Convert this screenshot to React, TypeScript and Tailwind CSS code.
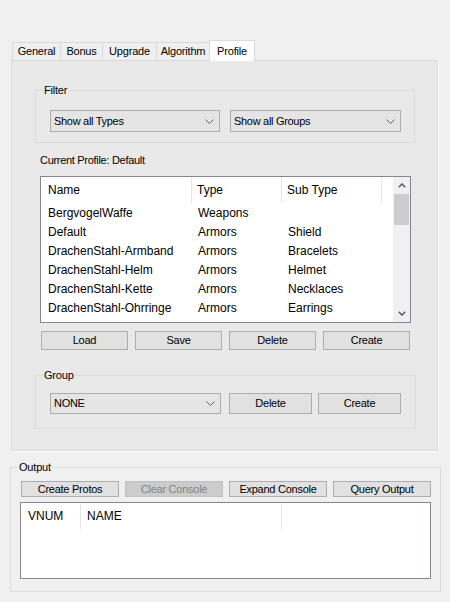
import React from "react";

const Chevron = () => (
  <svg width="9" height="5" viewBox="0 0 9 5" className="shrink-0">
    <polyline points="0.5,0.5 4.5,4.5 8.5,0.5" fill="none" stroke="#606060" strokeWidth="1" />
  </svg>
);

const Combo = ({ text, w, h }: { text: string; w: string; h: string }) => (
  <div className={`${w} ${h} border border-[#adadad] bg-[#e5e5e5] flex items-center justify-between pl-[3px] pr-[5px]`}>
    <span className="text-[11px] tracking-[-0.3px] leading-none">{text}</span>
    <Chevron />
  </div>
);

const Btn = ({ text, w, h, disabled }: { text: string; w: string; h: string; disabled?: boolean }) => (
  <div
    className={`${w} ${h} border flex items-center justify-center text-[11px] tracking-[-0.25px] leading-none ${
      disabled ? "bg-[#cccccc] border-[#bfbfbf] text-[#838383]" : "bg-[#e1e1e1] border-[#adadad] text-black"
    }`}
  >
    {text}
  </div>
);

const rows = [
  ["BergvogelWaffe", "Weapons", ""],
  ["Default", "Armors", "Shield"],
  ["DrachenStahl-Armband", "Armors", "Bracelets"],
  ["DrachenStahl-Helm", "Armors", "Helmet"],
  ["DrachenStahl-Kette", "Armors", "Necklaces"],
  ["DrachenStahl-Ohrringe", "Armors", "Earrings"],
];

export default function App() {
  return (
    <div className="w-[450px] h-[602px] bg-[#f0f0f0] overflow-hidden text-[12px] text-black font-['Liberation_Sans',Arial,sans-serif] pt-[40px]">
      <div className="ml-[11px] w-[427px]">
        {/* Tabs */}
        <div className="flex items-end h-[20px] pl-[1px] relative z-10">
          <div className="w-[48px] h-[18px] border-l border-t border-[#d9d9d9] bg-[#f0f0f0] flex items-center justify-center text-[11px] tracking-[-0.2px]">General</div>
          <div className="w-[42px] h-[18px] border-l border-t border-[#d9d9d9] bg-[#f0f0f0] flex items-center justify-center text-[11px] tracking-[-0.2px]">Bonus</div>
          <div className="w-[54px] h-[18px] border-l border-t border-[#d9d9d9] bg-[#f0f0f0] flex items-center justify-center text-[11px] tracking-[-0.2px]">Upgrade</div>
          <div className="w-[53px] h-[18px] border-l border-t border-[#d9d9d9] bg-[#f0f0f0] flex items-center justify-center text-[11px] tracking-[-0.2px]">Algorithm</div>
          <div className="w-[46px] h-[21px] -mb-[1px] border border-b-0 border-[#d9d9d9] bg-white flex items-start justify-center pt-[2px] text-[11px] tracking-[-0.2px]">Profile</div>
        </div>

        {/* Panel */}
        <div className="h-[391px] border border-[#d9d9d9] bg-[#e9e9e9] shadow-[1px_1px_0_#ffffff]">
          {/* Filter group */}
          <div className="ml-[23px] mt-[29px] w-[380px] h-[53px] border border-[#dcdcdc] relative">
            <span className="absolute left-[7px] -top-[8px] px-[1px] bg-[#e9e9e9] text-[11px] tracking-[-0.2px] leading-[14px]">Filter</span>
            <div className="flex gap-[10px] pt-[19px] pl-[14px]">
              <Combo text="Show all Types" w="w-[170px]" h="h-[22px]" />
              <Combo text="Show all Groups" w="w-[171px]" h="h-[22px]" />
            </div>
          </div>

          <div className="ml-[28px] mt-[10px] text-[11px] tracking-[-0.3px] leading-[14px]">Current Profile: Default</div>

          {/* List view */}
          <div className="ml-[28px] mt-[9px] w-[371px] h-[147px] border border-[#828790] bg-white flex">
            <div className="flex-1 flex flex-col">
              <div className="flex h-[26px] items-center">
                <div className="w-[151px] h-full flex items-center pl-[7px] border-r border-[#e5e5e5]">Name</div>
                <div className="w-[90px] h-full flex items-center pl-[5px] border-r border-[#e5e5e5]">Type</div>
                <div className="w-[100px] h-full flex items-center pl-[5px] border-r border-[#e5e5e5]">Sub Type</div>
              </div>
              {rows.map((r) => (
                <div key={r[0]} className="flex h-[19px] items-center">
                  <div className="w-[151px] pl-[7px]">{r[0]}</div>
                  <div className="w-[90px] pl-[6px]">{r[1]}</div>
                  <div className="w-[100px] pl-[6px]">{r[2]}</div>
                </div>
              ))}
            </div>
            <div className="w-[17px] bg-[#f0f0f0] flex flex-col items-center">
              <div className="h-[17px] w-full flex items-center justify-center">
                <svg width="8" height="5" viewBox="0 0 8 5">
                  <polyline points="0.8,4.2 4,1 7.2,4.2" fill="none" stroke="#606060" strokeWidth="1.6" />
                </svg>
              </div>
              <div className="w-[15px] h-[31px] bg-[#cdcdcd]" />
              <div className="flex-1" />
              <div className="h-[17px] w-full flex items-center justify-center">
                <svg width="8" height="5" viewBox="0 0 8 5">
                  <polyline points="0.8,0.8 4,4 7.2,0.8" fill="none" stroke="#606060" strokeWidth="1.6" />
                </svg>
              </div>
            </div>
          </div>

          {/* Profile buttons */}
          <div className="ml-[29px] mt-[8px] flex gap-[7px]">
            <Btn text="Load" w="w-[87px]" h="h-[19px]" />
            <Btn text="Save" w="w-[87px]" h="h-[19px]" />
            <Btn text="Delete" w="w-[87px]" h="h-[19px]" />
            <Btn text="Create" w="w-[87px]" h="h-[19px]" />
          </div>

          {/* Group */}
          <div className="ml-[23px] mt-[25px] w-[381px] h-[54px] border border-[#dcdcdc] relative">
            <span className="absolute left-[7px] -top-[8px] px-[1px] bg-[#e9e9e9] text-[11px] tracking-[-0.2px] leading-[14px]">Group</span>
            <div className="flex pt-[17px] pl-[14px]">
              <Combo text="NONE" w="w-[171px]" h="h-[21px]" />
              <div className="ml-[8px]"><Btn text="Delete" w="w-[83px]" h="h-[21px]" /></div>
              <div className="ml-[6px]"><Btn text="Create" w="w-[83px]" h="h-[21px]" /></div>
            </div>
          </div>
        </div>
      </div>

      {/* Output */}
      <div className="ml-[10px] mt-[16px] w-[431px] h-[125px] border border-[#dcdcdc] relative">
        <span className="absolute left-[7px] -top-[8px] px-[1px] bg-[#f0f0f0] text-[11px] tracking-[-0.2px] leading-[14px]">Output</span>
        <div className="flex gap-[6px] pt-[13px] pl-[10px]">
          <Btn text="Create Protos" w="w-[98px]" h="h-[16px]" />
          <Btn text="Clear Console" w="w-[98px]" h="h-[16px]" disabled />
          <Btn text="Expand Console" w="w-[98px]" h="h-[16px]" />
          <Btn text="Query Output" w="w-[98px]" h="h-[16px]" />
        </div>
        <div className="ml-[9px] mt-[5px] w-[411px] h-[77px] border border-[#828790] bg-white">
          <div className="flex h-[26px] items-center">
            <div className="w-[60px] h-full flex items-center pl-[7px] border-r border-[#e5e5e5]">VNUM</div>
            <div className="w-[201px] h-full flex items-center pl-[6px] border-r border-[#e5e5e5]">NAME</div>
          </div>
        </div>
      </div>
    </div>
  );
}
